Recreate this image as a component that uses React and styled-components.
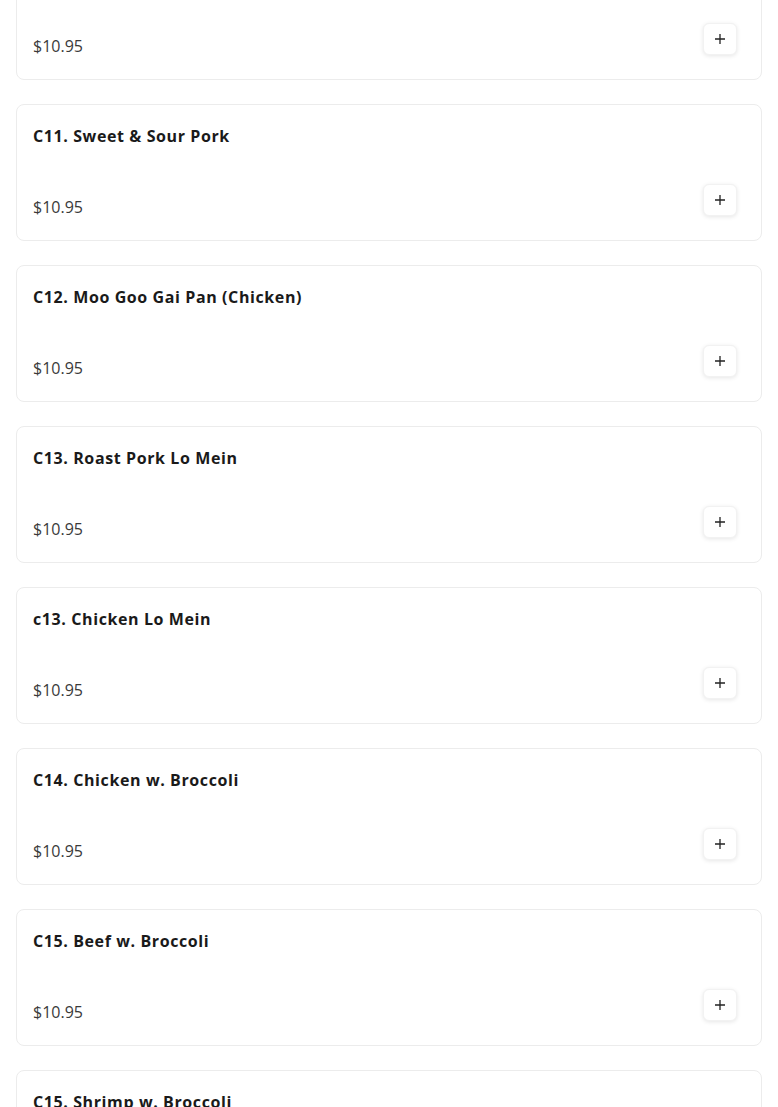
import React from "react";
import styled, { createGlobalStyle } from "styled-components";

const GlobalStyle = createGlobalStyle`
  html, body {
    margin: 0;
    padding: 0;
    background: #fff;
  }
  body {
    font-family: "Open Sans", "Liberation Sans", sans-serif;
    color: #1c1c1c;
  }
`;

const items = [
  { name: "C10. Pepper Steak w. Onion", price: "$10.95" },
  { name: "C11. Sweet & Sour Pork", price: "$10.95" },
  { name: "C12. Moo Goo Gai Pan (Chicken)", price: "$10.95" },
  { name: "C13. Roast Pork Lo Mein", price: "$10.95" },
  { name: "c13. Chicken Lo Mein", price: "$10.95" },
  { name: "C14. Chicken w. Broccoli", price: "$10.95" },
  { name: "C15. Beef w. Broccoli", price: "$10.95" },
  { name: "C15. Shrimp w. Broccoli", price: "$10.95" },
];

const PlusIcon = () => (
  <svg width="12" height="12" viewBox="0 0 12 12" fill="none">
    <path d="M6 1v10M1 6h10" stroke="#222" strokeWidth="1.3" />
  </svg>
);

export default function App() {
  return (
    <>
      <GlobalStyle />
      <List>
        {items.map((item, i) => (
          <Card key={i}>
            <Title>{item.name}</Title>
            <Bottom>
              <Price>{item.price}</Price>
              <AddButton aria-label="Add">
                <PlusIcon />
              </AddButton>
            </Bottom>
          </Card>
        ))}
      </List>
    </>
  );
}

const List = styled.div`
  display: flex;
  flex-direction: column;
  gap: 24px;
  padding: 0 16px;
  margin-top: -57px;
`;

const Card = styled.div`
  box-sizing: border-box;
  height: 137px;
  border: 1px solid #ececec;
  border-radius: 8px;
  background: #fff;
  padding: 20px 24px 24px 16px;
  display: flex;
  flex-direction: column;
  justify-content: space-between;
`;

const Title = styled.h3`
  margin: 0;
  font-size: 16px;
  line-height: 22px;
  font-weight: 700;
  letter-spacing: 0.6px;
  color: #1a1a1a;
`;

const Bottom = styled.div`
  display: flex;
  justify-content: space-between;
  align-items: flex-end;
`;

const Price = styled.span`
  font-size: 16px;
  line-height: 18px;
  color: #3a3a3a;
`;

const AddButton = styled.button`
  width: 34px;
  height: 32px;
  display: flex;
  align-items: center;
  justify-content: center;
  padding: 0;
  border: 1px solid #f2f2f2;
  border-radius: 6px;
  background: #fff;
  box-shadow: 0 1px 4px rgba(0, 0, 0, 0.1);
  cursor: pointer;
`;
